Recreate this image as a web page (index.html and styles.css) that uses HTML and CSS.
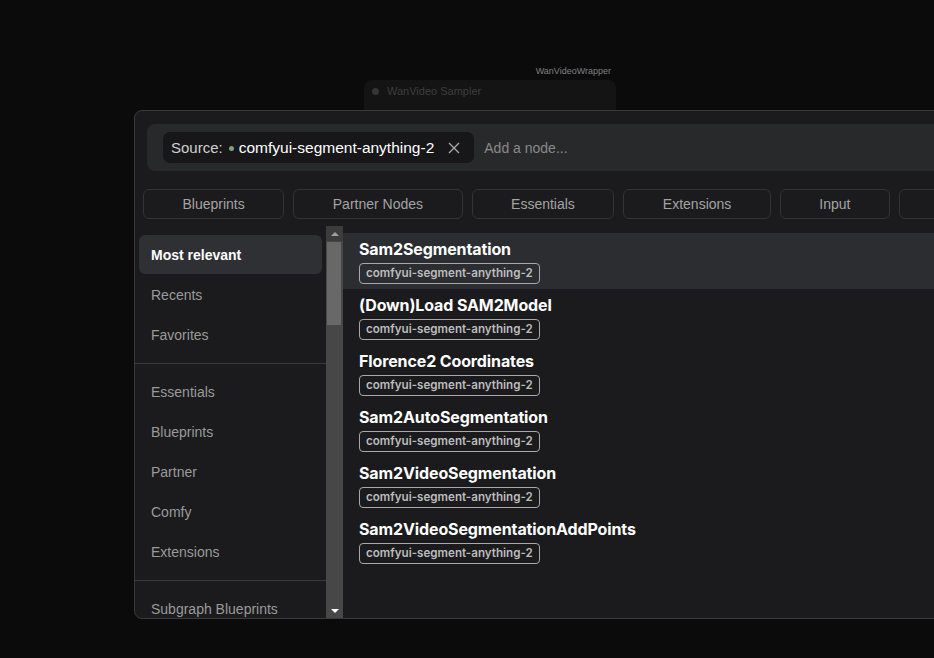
FILE: index.html
```html
<!DOCTYPE html>
<html lang="en">
<head>
    <meta charset="UTF-8">
    <meta name="viewport" content="width=device-width, initial-scale=1.0">
    <title>Node Search</title>
    <link rel="stylesheet" href="styles.css">
</head>
<body>
    <!-- canvas behind the dialog -->
    <div class="canvas">
        <div class="node">
            <div class="nodeGroup">WanVideoWrapper</div>
            <div class="nodeTitle"><span class="nodeDot"></span>WanVideo Sampler</div>
        </div>
    </div>

    <div class="dialog">
        <div class="searchBar">
            <div class="sourceChip">
                <span class="sourceLabel">Source:</span>
                <span class="sourceDot"></span>
                <span class="sourceName">comfyui-segment-anything-2</span>
                <svg class="sourceClose" width="12" height="12" viewBox="0 0 12 12">
                    <path d="M1 1 L11 11 M11 1 L1 11" stroke="#a8a8a8" stroke-width="1.4" fill="none"/>
                </svg>
            </div>
            <span class="placeholder">Add a node...</span>
        </div>

        <div class="filters">
            <button class="filter">Blueprints</button>
            <button class="filter">Partner Nodes</button>
            <button class="filter">Essentials</button>
            <button class="filter">Extensions</button>
            <button class="filter">Input</button>
            <button class="filter filterMore"></button>
        </div>

        <div class="main">
            <div class="sidebar">
                <div class="sideItem active">Most relevant</div>
                <div class="sideItem">Recents</div>
                <div class="sideItem">Favorites</div>
                <div class="sideDivider"></div>
                <div class="sideItem">Essentials</div>
                <div class="sideItem">Blueprints</div>
                <div class="sideItem">Partner</div>
                <div class="sideItem">Comfy</div>
                <div class="sideItem">Extensions</div>
                <div class="sideDivider"></div>
                <div class="sideItem">Subgraph Blueprints</div>
            </div>

            <div class="scrollbar">
                <div class="arrow up"></div>
                <div class="track">
                    <div class="thumb"></div>
                </div>
                <div class="arrow down"></div>
            </div>

            <ul class="results">
                <li class="result selected">
                    <div class="resultTitle">Sam2Segmentation</div>
                    <span class="tag">comfyui-segment-anything-2</span>
                </li>
                <li class="result">
                    <div class="resultTitle">(Down)Load SAM2Model</div>
                    <span class="tag">comfyui-segment-anything-2</span>
                </li>
                <li class="result">
                    <div class="resultTitle">Florence2 Coordinates</div>
                    <span class="tag">comfyui-segment-anything-2</span>
                </li>
                <li class="result">
                    <div class="resultTitle">Sam2AutoSegmentation</div>
                    <span class="tag">comfyui-segment-anything-2</span>
                </li>
                <li class="result">
                    <div class="resultTitle">Sam2VideoSegmentation</div>
                    <span class="tag">comfyui-segment-anything-2</span>
                </li>
                <li class="result">
                    <div class="resultTitle">Sam2VideoSegmentationAddPoints</div>
                    <span class="tag">comfyui-segment-anything-2</span>
                </li>
            </ul>
        </div>
    </div>
</body>
</html>
```

FILE: styles.css
```css
/* Base da página */
body {
    margin: 0;
    width: 934px;
    height: 658px;
    overflow: hidden;
    background-color: #0b0b0b;
    font-family: "Liberation Sans", Arial, sans-serif;
    position: relative;
}

/* Canvas de fundo com o nó */
.canvas {
    position: absolute;
    inset: 0;
}

.node {
    position: absolute;
    left: 364px;
    top: 80px;
    width: 252px;
    height: 60px;
    background-color: #141414;
    border-radius: 8px;
}

.nodeGroup {
    position: absolute;
    right: 5px;
    top: -14px;
    font-size: 9px;
    color: #808080;
}

.nodeTitle {
    display: flex;
    align-items: center;
    gap: 8px;
    padding: 5px 8px;
    font-size: 11px;
    color: #3e3e3e;
}

.nodeDot {
    width: 7px;
    height: 7px;
    border-radius: 50%;
    background-color: #353535;
}

/* Diálogo de busca */
.dialog {
    position: absolute;
    left: 134px;
    top: 110px;
    width: 840px;
    height: 509px;
    box-sizing: border-box;
    border: 1px solid #3a3a3c;
    border-radius: 8px;
    background-color: #1b1b1d;
    display: flex;
    flex-direction: column;
    overflow: hidden;
}

.searchBar {
    margin: 13px 0 0 12px;
    height: 47px;
    background-color: #28292b;
    border-radius: 8px;
    display: flex;
    align-items: center;
    padding-left: 16px;
}

.sourceChip {
    height: 31px;
    display: flex;
    align-items: center;
    background-color: #17171a;
    border-radius: 7px;
    padding: 0 14px 0 8px;
    font-size: 15px;
}

.sourceLabel {
    color: #cfcfcf;
}

.sourceDot {
    width: 5px;
    height: 5px;
    border-radius: 50%;
    background-color: #7fa07f;
    margin: 1px 5px 0 6px;
}

.sourceName {
    color: #ffffff;
    font-size: 15.5px;
}

.sourceClose {
    margin-left: 14px;
}

.placeholder {
    margin-left: 10px;
    font-size: 14px;
    color: #8a8a8a;
}

/* Filtros */
.filters {
    display: flex;
    gap: 9px;
    margin-top: 18px;
    padding-left: 8px;
}

.filter {
    flex-shrink: 0;
    height: 30px;
    padding: 0 38.5px;
    background-color: #1b1b1d;
    border: 1px solid #343436;
    border-radius: 6px;
    font-family: "Liberation Sans", Arial, sans-serif;
    font-size: 14px;
    color: #a3a3a3;
}

.filterMore {
    width: 140px;
}

/* Área principal */
.main {
    flex: 1;
    display: flex;
    margin-top: 7px;
    min-height: 0;
}

.sidebar {
    width: 191px;
    flex-shrink: 0;
    overflow: hidden;
    padding-top: 9px;
}

.sideItem {
    height: 40px;
    line-height: 40px;
    margin: 0 4px;
    padding-left: 12px;
    font-size: 14px;
    color: #9a9a9a;
    border-radius: 6px;
    white-space: nowrap;
}

.sideItem.active {
    height: 39px;
    line-height: 40px;
    margin-bottom: 1px;
    background-color: #2f3034;
    color: #ffffff;
    font-weight: bold;
}

.sideDivider {
    height: 1px;
    background-color: #3b3b3d;
    margin: 8px 0;
}

/* Barra de rolagem desenhada */
.scrollbar {
    width: 17px;
    flex-shrink: 0;
    display: flex;
    flex-direction: column;
    background-color: #474747;
}

.arrow {
    height: 15px;
    display: flex;
    align-items: center;
    justify-content: center;
}

.arrow.up {
    background-color: #3c3c3c;
}

.arrow::after {
    content: "";
    border-left: 4px solid transparent;
    border-right: 4px solid transparent;
}

.arrow.up::after {
    border-bottom: 4px solid #a0a0a0;
}

.arrow.down::after {
    border-top: 4px solid #ffffff;
}

.track {
    flex: 1;
    padding: 1px 2px 0 1px;
}

.thumb {
    height: 83px;
    background-color: #686868;
}

/* Resultados */
.results {
    list-style-type: none;
    margin: 0;
    padding: 7px 0 0 0;
    flex: 1;
    font-family: Inter, "Liberation Sans", sans-serif;
}

.result {
    height: 56px;
    box-sizing: border-box;
    padding: 6px 16px 0 16px;
}

.result.selected {
    background-color: #2c2d30;
}

.resultTitle {
    font-size: 16px;
    line-height: 20px;
    font-weight: 700;
    letter-spacing: -0.12px;
    color: #ffffff;
    margin-bottom: 2px;
}

.tag {
    display: inline-block;
    height: 21px;
    line-height: 19px;
    box-sizing: border-box;
    padding: 0 6px;
    border: 1px solid #a8a8a8;
    border-radius: 4px;
    font-size: 11.6px;
    font-weight: 600;
    color: #bdbdbd;
}
```
